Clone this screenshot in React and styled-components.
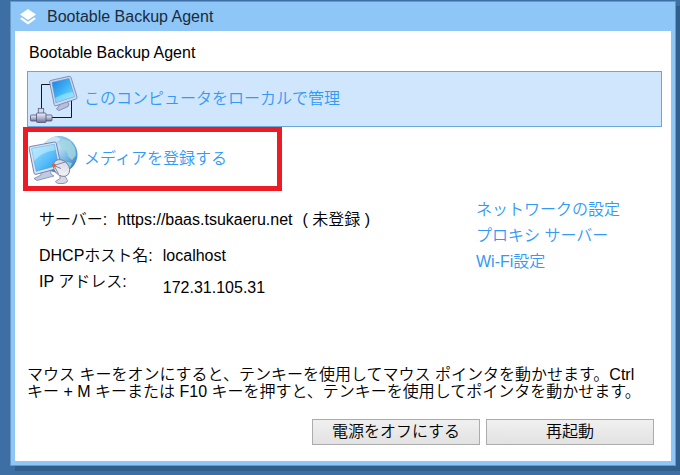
import React from 'react';
import styled, { createGlobalStyle, css } from 'styled-components';

const COLORS = {
  desktop: '#3d6fa5',
  shadow: '#315f8b',
  frame: '#8dc6f7',
  frameEdge: '#6699c8',
  link: '#3399f7',
  selected: '#d0e6fc',
  selectedEdge: '#6aa5de',
  highlight: '#ed1c24',
};

const GlobalStyle = createGlobalStyle`
  * {
    box-sizing: border-box;
  }

  body {
    margin: 0;
    background: ${COLORS.desktop};
    color: #000;
    font-family: 'Liberation Sans', 'Noto Sans CJK JP', sans-serif;
    font-size: 16px;
    font-weight: 350;
    line-height: 26px;
  }
`;

const Desktop = styled.div`
  display: flex;
  min-height: 100vh;
  padding: 1px 4px 9px 10px;
`;

const Window = styled.main`
  flex: 1;
  min-width: 0;
  display: flex;
  flex-direction: column;
  padding: 0 4px 4px;
  background: ${COLORS.frame};
  border: 1px solid ${COLORS.frameEdge};
  box-shadow: 5px 5px 0 ${COLORS.shadow};
`;

const TitleBar = styled.header`
  display: flex;
  align-items: center;
  gap: 10px;
  height: 29px;
  padding-left: 4px;
  color: #1c2b3a;
`;

const WindowTitle = styled.h1`
  margin: 0;
  font-size: 16px;
  font-weight: 350;
`;

const Body = styled.div`
  flex: 1;
  display: flex;
  flex-direction: column;
  padding: 9px 9px 16px 12px;
  background: #fff;
`;

const Heading = styled.h2`
  margin: 0 0 5px 2px;
  font-size: 16px;
  font-weight: 350;
`;

const Action = styled.button`
  display: flex;
  align-items: center;
  gap: 2px;
  padding: 0;
  background: none;
  border: 0;
  color: ${COLORS.link};
  font: inherit;
  text-align: left;
  cursor: pointer;

  ${({ $selected }) => $selected && css`
    background: ${COLORS.selected};
    border: 1px solid ${COLORS.selectedEdge};
  `}

  ${({ $highlighted }) => $highlighted && css`
    align-self: flex-start;
    margin-left: -4px;
    padding-right: 50px;
    border: 5px solid ${COLORS.highlight};
  `}
`;

const ActionIcon = styled.svg`
  flex: none;
  width: 54px;
  height: 54px;
`;

const Details = styled.section`
  display: flex;
  justify-content: space-between;
  margin-top: 6px;
`;

const Info = styled.div`
  display: flex;
  flex-direction: column;
  gap: 7px;
  padding: 10px 0 0 12px;
`;

const InfoRow = styled.div`
  display: flex;
  align-items: baseline;
  gap: 10px;
`;

const Column = styled.div`
  display: flex;
  flex-direction: column;
  line-height: ${({ $line }) => $line || 26}px;
`;

const Links = styled.nav`
  display: flex;
  flex-direction: column;
  width: 186px;

  a {
    color: ${COLORS.link};
    text-decoration: none;
  }
`;

const Hint = styled.p`
  margin: auto 8px 19px 0;
  line-height: 17px;
`;

const Footer = styled.footer`
  display: flex;
  justify-content: flex-end;
  gap: 6px;
  padding-right: 8px;
`;

const Button = styled.button`
  width: 168px;
  height: 26px;
  padding: 0;
  background: linear-gradient(#f0f0f0, #e2e2e2);
  border: 1px solid #acacac;
  color: #000;
  font: inherit;
  line-height: 22px;
  cursor: pointer;
`;

function LayersLogo() {
  return (
    <svg width="18" height="18" viewBox="0 0 18 18" fill="#fff" aria-hidden="true">
      <path d="M9 1 L17 6.6 L9 12 L1 6.6 Z" />
      <path d="M1 10.8 L2.8 9.6 L9 13.8 L15.2 9.6 L17 10.8 L9 16.4 Z" />
    </svg>
  );
}

function LocalIcon() {
  return (
    <ActionIcon viewBox="2 0 54 54" aria-hidden="true">
      <defs>
        <linearGradient id="localScreen" x1="0" y1="0" x2="1" y2="1">
          <stop offset="0" stopColor="#1c7fe0" />
          <stop offset="0.5" stopColor="#3fb4f6" />
          <stop offset="1" stopColor="#8ee6ff" />
        </linearGradient>
        <linearGradient id="pipe" x1="0" y1="0" x2="0" y2="1">
          <stop offset="0" stopColor="#eef0f8" />
          <stop offset="0.5" stopColor="#b4b8d0" />
          <stop offset="1" stopColor="#6c7096" />
        </linearGradient>
      </defs>
      <path d="M25 12.5 H15.5 V37 M45.5 27 V45.5 H26" fill="none" stroke="#15151f" />
      <path d="M33 30 L40 28 L43 32 L42 34.5 L33 38.5 L30.5 37 L33 34 Z" fill="#b6bfdc" stroke="#69749f" strokeWidth="0.7" />
      <path d="M24.5 8.5 L43 4.3 Q44.5 4 45 5.5 L51 25 Q51.3 26.5 50 27 L30 33.8 Q28.5 34.2 28.2 32.5 L23.6 10 Q23.5 8.8 24.5 8.5 Z" fill="#cfd7ee" stroke="#7584b0" strokeWidth="0.9" />
      <path d="M26 10.4 L43 6.5 L48.4 24.6 L30 30.5 Z" fill="url(#localScreen)" stroke="#4a8fd4" strokeWidth="0.6" />
      <path d="M30 30.5 L48.4 24.6 L47 20 Q38 21 29 26 Z" fill="#a9efff" opacity="0.55" />
      <rect x="4.5" y="43" width="21.5" height="6" rx="0.8" fill="url(#pipe)" stroke="#4f527a" strokeWidth="0.8" />
      <rect x="12.3" y="36.5" width="5.4" height="6" fill="#d5d8e8" stroke="#5d6088" strokeWidth="0.8" />
      <rect x="10.5" y="41" width="9.5" height="9.5" rx="1" fill="url(#pipe)" stroke="#4f527a" strokeWidth="0.8" />
    </ActionIcon>
  );
}

function RegisterIcon() {
  return (
    <ActionIcon viewBox="2 -2 54 54" aria-hidden="true">
      <defs>
        <radialGradient id="globe" cx="0.45" cy="0.3" r="0.7">
          <stop offset="0" stopColor="#c5e6fa" />
          <stop offset="0.6" stopColor="#71b3e3" />
          <stop offset="1" stopColor="#3a7fc0" />
        </radialGradient>
        <linearGradient id="mediaScreen" x1="0" y1="0" x2="1" y2="1">
          <stop offset="0" stopColor="#a6e4ff" />
          <stop offset="0.6" stopColor="#56bcf9" />
          <stop offset="1" stopColor="#2292ec" />
        </linearGradient>
        <linearGradient id="dish" x1="0" y1="0" x2="1" y2="1">
          <stop offset="0" stopColor="#cfd3e2" />
          <stop offset="1" stopColor="#f8f8fc" />
        </linearGradient>
      </defs>
      <circle cx="33" cy="20.5" r="18.5" fill="url(#globe)" />
      <path d="M19 9 Q23 3 30 2.5 L35 5 L31 8 L28 13 L22 14 Z" fill="#e0f2f8" opacity="0.7" />
      <path d="M37 5 L44 7 L49 14 L50 21 L46 26 L42 22 L41 17 L36 15 L34 9 Z" fill="#a5d8de" opacity="0.8" />
      <path d="M41 28 L46 29 L44 34 L40 35 Z" fill="#b3dfeb" opacity="0.7" />
      <path d="M15 37 L24 34 L25 40 L28 42 L11 46.5 L8 44.5 L15 41 Z" fill="#bfcae3" stroke="#6d7da8" strokeWidth="0.7" />
      <path d="M4 12.6 L28.5 8 Q30 7.8 30.3 9.3 L35 32 Q35.2 33.5 34 33.8 L10 40.3 Q8.3 40.6 8 39 L3 14 Q2.8 12.8 4 12.6 Z" fill="#dbe3f5" stroke="#6679a8" strokeWidth="0.9" />
      <path d="M5.7 14.5 L28.2 10.4 L32.6 31.3 L10.2 37.2 Z" fill="url(#mediaScreen)" stroke="#4c9cda" strokeWidth="0.6" />
      <path d="M5.7 14.5 L28.2 10.4 L29.3 16 Q16 18 8 27 Z" fill="#d1f3ff" opacity="0.5" />
      <path d="M36.5 38 L41 45.5 Q43 48.5 37 49.5 Q30 50 29.5 47.5 L34 44.5 L34 39 Z" fill="#d4d8e6" stroke="#777e9b" strokeWidth="0.8" />
      <ellipse cx="35.5" cy="34" rx="9.3" ry="7.2" transform="rotate(48 35.5 34)" fill="url(#dish)" stroke="#777e9b" strokeWidth="0.9" />
      <path d="M28 31.5 L39 28 M28 31.5 L35 34.5 M28 31.5 L32.5 40" fill="none" stroke="#737b98" strokeWidth="0.9" />
      <circle cx="28" cy="31.3" r="1.7" fill="#f25b1d" />
    </ActionIcon>
  );
}

function App() {
  return (
    <>
      <GlobalStyle />
      <Desktop>
        <Window>
          <TitleBar>
            <LayersLogo />
            <WindowTitle>Bootable Backup Agent</WindowTitle>
          </TitleBar>
          <Body>
            <Heading>Bootable Backup Agent</Heading>
            <Action type="button" $selected>
              <LocalIcon />
              このコンピュータをローカルで管理
            </Action>
            <Action type="button" $highlighted>
              <RegisterIcon />
              メディアを登録する
            </Action>
            <Details>
              <Info>
                <InfoRow>
                  <span>サーバー:</span>
                  <span>https://baas.tsukaeru.net</span>
                  <span>( 未登録 )</span>
                </InfoRow>
                <InfoRow>
                  <Column>
                    <span>DHCPホスト名:</span>
                    <span>IP アドレス:</span>
                  </Column>
                  <Column $line={32}>
                    <span>localhost</span>
                    <span>172.31.105.31</span>
                  </Column>
                </InfoRow>
              </Info>
              <Links>
                <a href="#network">ネットワークの設定</a>
                <a href="#proxy">プロキシ サーバー</a>
                <a href="#wifi">Wi-Fi設定</a>
              </Links>
            </Details>
            <Hint>
              マウス キーをオンにすると、テンキーを使用してマウス ポインタを動かせます。Ctrl
              キー + M キーまたは F10 キーを押すと、テンキーを使用してポインタを動かせます。
            </Hint>
            <Footer>
              <Button type="button">電源をオフにする</Button>
              <Button type="button">再起動</Button>
            </Footer>
          </Body>
        </Window>
      </Desktop>
    </>
  );
}

export default App;
